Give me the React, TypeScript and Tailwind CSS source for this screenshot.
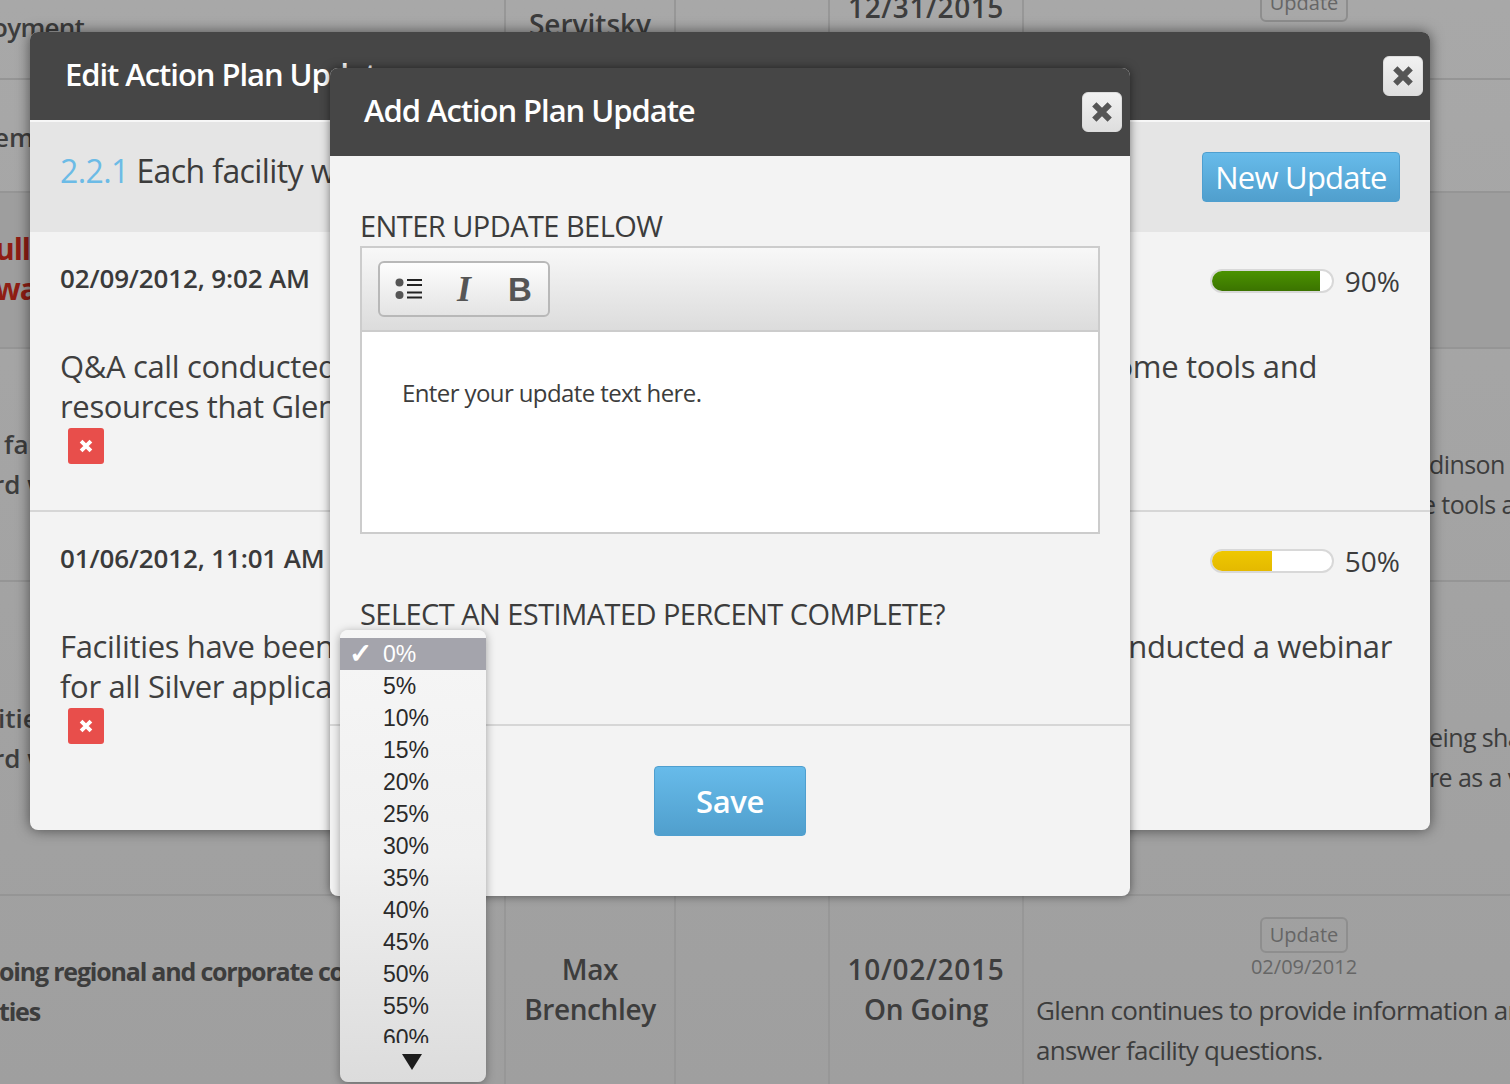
import { ReactNode } from "react";

const percents = ["5%", "10%", "15%", "20%", "25%", "30%", "35%", "40%", "45%", "50%", "55%", "60%"];

function CloseIcon({ className }: { className: string }) {
  return (
    <svg viewBox="0 0 20 20" className={className} fill="none" stroke="currentColor" strokeWidth="5.5">
      <path d="M3 3 L17 17 M17 3 L3 17" />
    </svg>
  );
}

function CloseButton() {
  return (
    <button className="flex h-10 w-10 items-center justify-center rounded-md border border-[#dcdcdc] bg-gradient-to-b from-[#f1f1f1] to-[#dedede] text-[#555]">
      <CloseIcon className="h-[22px] w-[22px]" />
    </button>
  );
}

function DeleteButton() {
  return (
    <button className="ml-2 mt-[2px] flex h-9 w-9 items-center justify-center rounded-[3px] bg-[#e84e4b] text-white">
      <CloseIcon className="h-3.5 w-3.5" />
    </button>
  );
}

function Progress({ value, color }: { value: number; color: string }) {
  return (
    <div className="flex items-center gap-[11px]">
      <div className="h-6 w-[124px] overflow-hidden rounded-full border-2 border-[#d8d8d8] bg-white">
        <div className={`h-full ${color}`} style={{ width: `${value}%` }} />
      </div>
      <span className="text-[28px] leading-none text-[#3c3c3c]">{value}%</span>
    </div>
  );
}

function Entry({
  date,
  left,
  right,
  rightGap,
  second,
  children,
}: {
  date: string;
  left: string;
  right: string;
  rightGap: string;
  second: string;
  children: ReactNode;
}) {
  return (
    <div className="h-[280px] border-b-2 border-[#d6d6d6] px-[30px] pt-[27px] last:border-b-0">
      <div className="flex items-center justify-between">
        <span className="pb-1 text-[26px] font-semibold tracking-[-0.15px] text-[#3a3a3a]">{date}</span>
        {children}
      </div>
      <div className={`mt-[44px] flex justify-between text-[31px] leading-10 tracking-[-0.35px] text-[#3f3f3f] ${rightGap}`}>
        <span>{left}</span>
        <span>{right}</span>
      </div>
      <p className="text-[31px] leading-10 tracking-[-0.35px] text-[#3f3f3f]">{second}</p>
      <DeleteButton />
    </div>
  );
}

function BgRow({ height, cells, dark }: { height: string; cells: ReactNode[]; dark?: boolean }) {
  return (
    <div className={`grid grid-cols-[504px_170px_154px_194px_562px] border-b-2 border-[#959595] ${height} ${dark ? "bg-[#9e9e9e]" : ""}`}>
      {cells.map((c, i) => (
        <div key={i} className={`overflow-hidden ${i > 0 ? "border-l-2 border-[#979797]" : ""}`}>
          {c}
        </div>
      ))}
    </div>
  );
}

function Background() {
  const strong = "text-[28px] font-semibold leading-10 text-[#3d3d3d] text-center";
  const note = "text-[25px] leading-10 tracking-[-0.6px] text-[#3d3d3d] whitespace-nowrap";
  return (
    <div className="flex flex-col text-[#3d3d3d]">
      <BgRow
        height="h-[80px]"
        cells={[
          <p className="-ml-2 pt-[8px] text-[26px] font-semibold tracking-[-0.7px] text-[#3d3d3d]">oyment</p>,
          <p className={`${strong} pt-[4px]`}>Servitsky</p>,
          <span />,
          <p className={`${strong} -mt-[13px] tracking-[0.6px]`}>12/31/2015</p>,
          <div className="-mt-4 flex justify-center">
            <span className="rounded-md border-2 border-[#8e8e8e] px-2 text-[20px] leading-[34px] text-[#666]">Update</span>
          </div>,
        ]}
      />
      <BgRow
        height="h-[113px]"
        cells={[<p className="-ml-[6px] pt-[38px] text-[26px] font-semibold">em</p>, <span />, <span />, <span />, <span />]}
      />
      <BgRow
        height="h-[156px]"
        dark
        cells={[
          <p className="-ml-[5px] pt-[36px] text-[30px] font-bold leading-10 tracking-[-1px] text-[#8f1d14]">
            ull
            <br />
            wa
          </p>,
          <span />,
          <span />,
          <span />,
          <span />,
        ]}
      />
      <BgRow
        height="h-[233px]"
        cells={[
          <p className="pt-[75px] text-[26px] font-semibold leading-10">
            <span className="ml-1">fa</span>
            <br />
            <span className="-ml-[7px]">rd w</span>
          </p>,
          <span />,
          <span />,
          <span />,
          <p className={`pt-[95px] pl-[405px] ${note}`}>
            dinson
            <br />
            <span className="-ml-[7px]">e tools a</span>
          </p>,
        ]}
      />
      <BgRow
        height="h-[314px]"
        cells={[
          <p className="-ml-[2px] pt-[116px] text-[26px] font-semibold leading-10">
            itie
            <br />
            <span className="-ml-[5px]">rd w</span>
          </p>,
          <span />,
          <span />,
          <span />,
          <p className={`pt-[135px] pl-[405px] ${note}`}>
            eing sha
            <br />
            re as a v
          </p>,
        ]}
      />
      <BgRow
        height="h-[200px]"
        cells={[
          <p className="pt-[55px] -ml-[1px] text-[25px] font-bold leading-10 tracking-[-1.2px] whitespace-nowrap">
            oing regional and corporate co
            <br />
            ties
          </p>,
          <p className={`${strong} pt-[53px] px-2 font-bold tracking-[-0.4px]`}>Max Brenchley</p>,
          <span />,
          <p className={`${strong} pt-[53px] font-bold`}>
            <span className="tracking-[0.7px]">10/02/2015</span>
            <br />
            <span className="tracking-[-0.2px]">On Going</span>
          </p>,
          <div className="flex flex-col items-center pt-[21px]">
            <span className="rounded-md border-2 border-[#8e8e8e] px-2 text-[20px] leading-[32px] text-[#666]">Update</span>
            <span className="text-[20px] leading-7 text-[#666]">02/09/2012</span>
            <p className="mt-[9px] w-full whitespace-nowrap pl-3 text-[26px] leading-10 tracking-[-0.7px]">
              Glenn continues to provide information and
              <br />
              answer facility questions.
            </p>
          </div>,
        ]}
      />
    </div>
  );
}

function OuterModal() {
  return (
    <div className="absolute left-[30px] top-8 h-[798px] w-[1400px] overflow-hidden rounded-lg bg-[#f3f3f3] shadow-[0_0_14px_rgba(0,0,0,0.55)]">
      <div className="relative flex h-[88px] items-center bg-[#464646] pl-[35px]">
        <h1 className="pb-1 text-[31px] font-semibold tracking-[-1.05px] text-white">Edit Action Plan Update</h1>
        <div className="absolute right-[7px] top-6">
          <CloseButton />
        </div>
      </div>
      <div className="flex h-[112px] items-center justify-between border-t-2 border-[#f7f7f7] bg-[#e5e5e5] pl-[30px] pr-[30px]">
        <p className="pb-3 text-[32px] tracking-[-0.6px] text-[#3c3c3c]">
          <span className="text-[#6cbbe6]">2.2.1</span> Each facility will
        </p>
        <button className="h-[50px] w-[198px] rounded-[4px] border border-[#4f9fcf] bg-gradient-to-b from-[#67bbea] to-[#509fcd] text-[31px] tracking-[-0.75px] text-white">
          New Update
        </button>
      </div>
      <Entry date="02/09/2012, 9:02 AM" left="Q&A call conducted" right="some tools and" rightGap="pr-[83px]" second="resources that Glenn">
        <Progress value={90} color="bg-gradient-to-b from-[#4b9300] to-[#3b7300]" />
      </Entry>
      <Entry date="01/06/2012, 11:01 AM" left="Facilities have been" right="conducted a webinar" rightGap="pr-2" second="for all Silver applicants">
        <Progress value={50} color="bg-gradient-to-b from-[#efc800] to-[#e4b900]" />
      </Entry>
    </div>
  );
}

function InnerModal() {
  return (
    <div className="absolute left-[330px] top-[68px] h-[828px] w-[800px] overflow-hidden rounded-lg bg-[#f3f3f3] shadow-[0_0_10px_rgba(0,0,0,0.5)]">
      <div className="relative flex h-[88px] items-center bg-[#464646] pl-[34px]">
        <h2 className="pb-1 text-[31px] font-semibold tracking-[-1.05px] text-white">Add Action Plan Update</h2>
        <div className="absolute right-[8px] top-6">
          <CloseButton />
        </div>
      </div>
      <div className="px-[30px] pt-[50px]">
        <label className="block text-[29px] leading-10 tracking-[-0.55px] text-[#3c3c3c]">ENTER UPDATE BELOW</label>
        <div className="h-[288px] border-2 border-[#cccccc] bg-white">
          <div className="flex h-[84px] items-center border-b-2 border-[#cccccc] bg-gradient-to-b from-[#f8f8f8] to-[#dcdcdc] pl-4">
            <div className="flex h-14 w-[172px] items-center rounded-md border-2 border-[#b8b8b8] bg-gradient-to-b from-[#fdfdfd] to-[#e4e4e4] pl-[15px]">
              <svg viewBox="0 0 28 24" className="h-6 w-7">
                <circle cx="4.5" cy="5.5" r="4" fill="#555" />
                <circle cx="4.5" cy="18" r="4" fill="#555" />
                <path d="M12 3h15M12 8h15M12 15.5h15M12 20.5h15" stroke="#222" strokeWidth="2" />
              </svg>
              <span className="ml-[34px] font-['Liberation_Serif',serif] text-[36px] font-bold italic leading-none text-[#555]">I</span>
              <span className="ml-[37px] font-['Liberation_Sans',sans-serif] text-[33px] font-bold leading-none text-[#555]">B</span>
            </div>
          </div>
          <p className="pl-10 pt-[45px] text-[24px] leading-8 tracking-[-0.6px] text-[#3c3c3c]">Enter your update text here.</p>
        </div>
        <label className="mt-[60px] block text-[29px] leading-10 tracking-[-0.55px] text-[#3c3c3c]">
          SELECT AN ESTIMATED PERCENT COMPLETE?
        </label>
      </div>
      <div className="mt-[90px] flex justify-center border-t-2 border-[#d6d6d6] pt-10">
        <button className="h-[70px] w-[152px] rounded-[4px] border border-[#4f9fcf] bg-gradient-to-b from-[#67bbea] to-[#509fcd] text-[31px] font-semibold tracking-[-0.4px] text-white">
          Save
        </button>
      </div>
    </div>
  );
}

function PercentMenu() {
  return (
    <div className="absolute left-[340px] top-[630px] h-[452px] w-[146px] overflow-hidden rounded-lg bg-gradient-to-b from-[#f6f6f6] via-[#f0f0f0] to-[#dcdcdc] pt-2 font-['Liberation_Sans',sans-serif] text-[23px] text-[#2a2a2a] shadow-[0_2px_10px_rgba(0,0,0,0.35)]">
      <div className="flex h-8 items-center bg-[#a4a4ac] text-white">
        <span className="w-[43px] pl-[9px] text-[28px] font-bold leading-none">✓</span>
        <span>0%</span>
      </div>
      <div className="h-[373px] overflow-hidden">
        {percents.map((p) => (
          <div key={p} className="flex h-8 items-center pl-[43px]">
            {p}
          </div>
        ))}
      </div>
      <div className="absolute bottom-[12px] left-[62px] h-0 w-0 border-x-[10px] border-t-[16px] border-x-transparent border-t-[#1c1c1c]" />
    </div>
  );
}

export default function App() {
  return (
    <div className="relative h-[1084px] w-[1510px] overflow-hidden bg-gradient-to-b from-[#a8a8a8] to-[#9f9f9f] font-['Open_Sans',sans-serif]">
      <Background />
      <OuterModal />
      <InnerModal />
      <PercentMenu />
    </div>
  );
}
